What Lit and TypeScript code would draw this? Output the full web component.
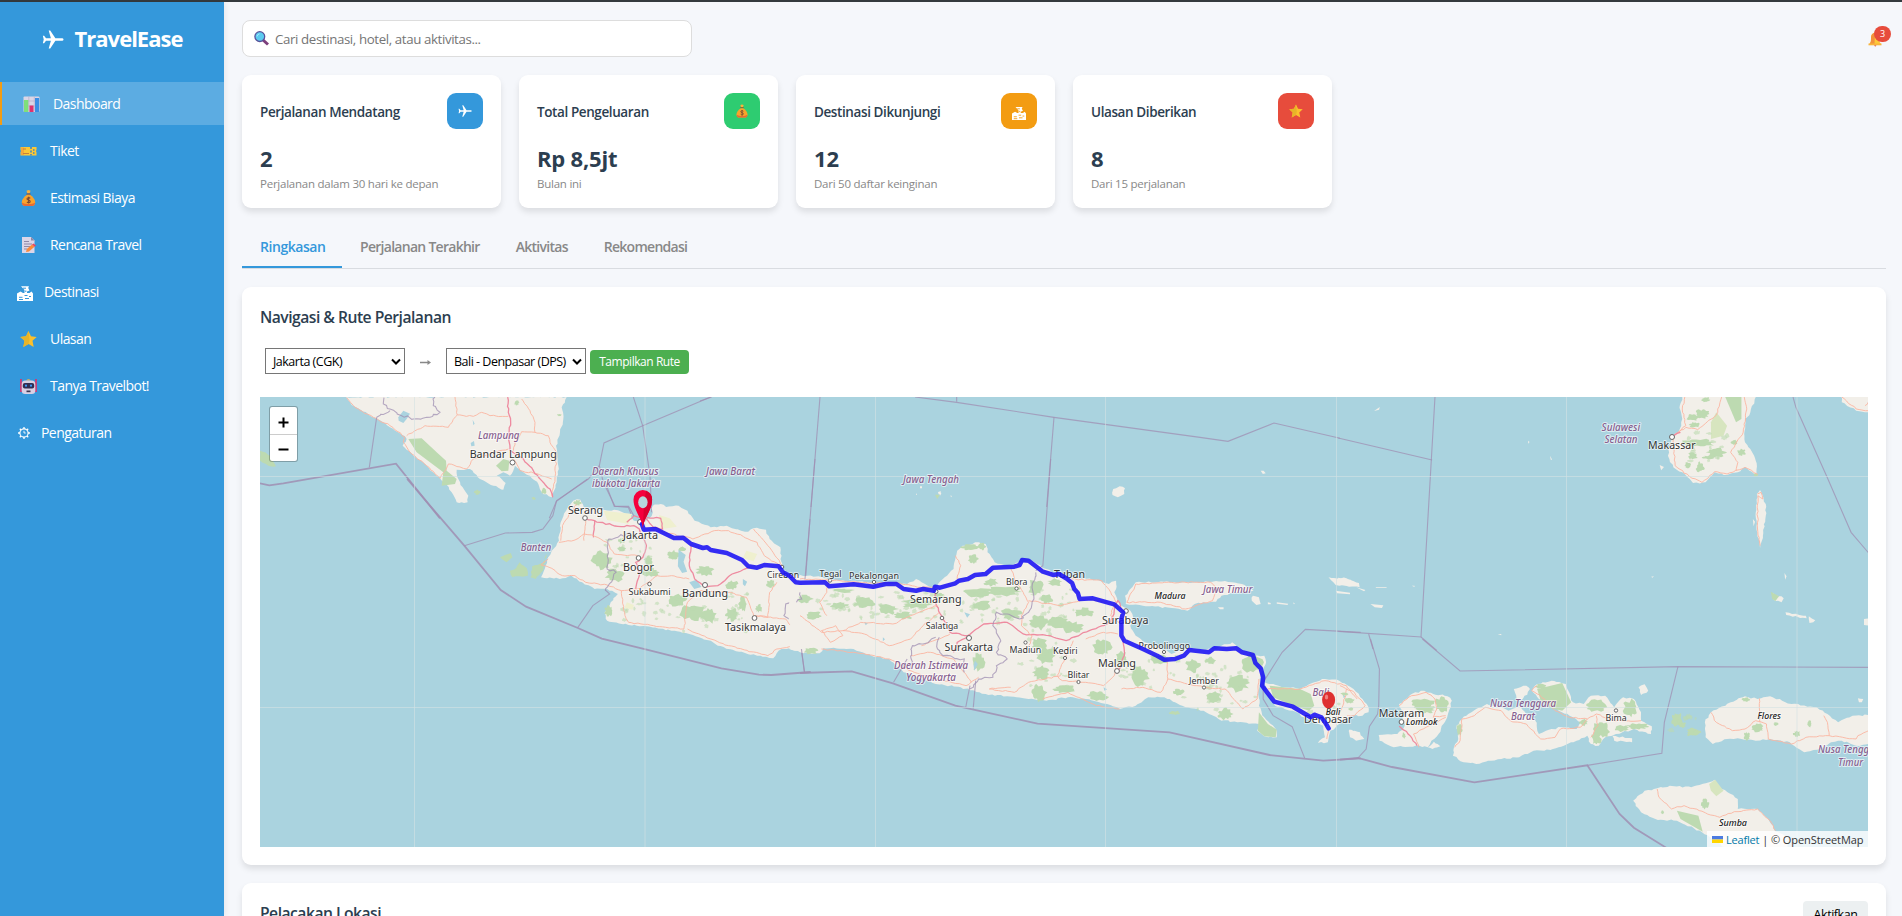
import { LitElement, html, svg, css } from "lit";
import { customElement } from "lit/decorators.js";

/* ---------- icons ---------- */
const plane = svg`<path fill="#fff" d="M21.4 9.3H14L8.6 1H7l2.3 8.3H4.2L2.2 6.6H.9l.9 3.9-.9 3.9h1.3l2-2.7h5.1L7 20h1.6L14 11.700h7.400q1.100-.4 1.100-1.200t-1.100-1.200z"/>`;
const bars = svg`<rect x=".5" y=".5" width="16" height="15.500" rx="1" fill="#dcd6e6"/><path d="M5.800.5v15M11.300.5v15M.5 5h16M.5 10h16" stroke="#b8aecb" stroke-width=".7"/><rect x="1" y="4" width="4.300" height="12" fill="#7fe07a"/><rect x="6.500" y="9.500" width="4" height="6.500" fill="#e0306e"/><rect x="12" y="2" width="4" height="14" fill="#3b8fe6"/>`;
const ticket = svg`<path d="M.5 4h10v1h1V4h5v3.200a1 1 0 0 0 0 1.800v3.500H.5V9a1 1 0 0 0 0-1.800z" fill="#fbc836"/><path d="M1 4.500h3v7.500H1z" fill="#f5a93b"/><path d="M3 6h3M3 10.500h6" stroke="#c8803c" stroke-width="1"/><path d="M11 4v2M11 7.500v2M11 11v1.500M13 7h1.500M13 10h1.500" stroke="#3b86c8" stroke-width="1.500"/>`;
const bag = svg`<path d="M6.500.8 8.500 0l2 .8-.8 2.500h-2.400z" fill="#fbb03b"/><path d="M6.500 3.500h4v1.200h-4z" fill="#8f4a2c"/><path d="M7 4.700h3c2.800 2 5.200 4.500 5.200 7.500 0 2.600-1.600 3.800-3 3.800H4.800c-1.400 0-3-1.200-3-3.800 0-3 2.400-5.500 5.200-7.500z" fill="#f9a32c"/><path d="M1.900 12.500c.2 2.600 1.600 3.500 2.900 3.500h7.400c1.300 0 2.700-.9 2.900-3.500-3 2-10 2-13.200 0z" fill="#e56b35"/><path d="M10.200 8.300c-.8-1-3.200-.8-3.200.6s3.200 1 3.200 2.500-2.400 1.600-3.300.5M8.600 6.800v6.800" stroke="#7d4a33" fill="none" stroke-width="1.100"/>`;
const memo = svg`<path d="M2 0h9l3.500 3.500V16H2z" fill="#dcd6e8"/><path d="M11 0v3.500h3.500z" fill="#8e86a5"/><path d="M4 4.500h5M4 7h8M4 9.500h6M4 12h3" stroke="#9188a8" stroke-width="1"/><path d="m6 15 .8-3L12 7.600l2.500 2.200L9 14.500z" fill="#fb8b3c"/><path d="m12 7.600 1.500-1.200 2.500 2-1.500 1.400z" fill="#e8455e"/>`;
const city = svg`<path fill="#fff" d="M0 16V8.500L3.500 6.500 6 8h1.500V5L4 1.200h8l-.8 1.800 1.300 2.500L10 6.500V8h2.500L14.500 6.500 16 8.500V16z"/><path stroke="var(--cut)" fill="none" d="M6 3.200h3M8.800 5.500v1.500M2 12.300h3.500M7.500 10.500h3M8 13.500h4M12 11.500h2M2 14.500h4"/>`;
const star = svg`<path d="m8.500.1 2.500 5.100 5.700.7-4.200 3.900 1.200 6.200-5.200-3-5.200 3 1.200-6.200L.3 5.900 6 5.200z" fill="#fbc02d"/><path d="m8.500.1-2.500 5.100-5.700.7 4.200 3.900-1.200 6.200 5.200-3 1-4z" fill="#e8b428"/>`;
const robot = svg`<path d="M1 1v13M16 1v13" stroke="#f0245e" stroke-width="1.500"/><path d="M6 2.500Q8.500 0 11 2.500z" fill="#fbb03b"/><rect x="1.700" y="2.500" width="13.600" height="13.500" rx="3.500" fill="#d8d0e4"/><rect x="2.800" y="5" width="11.400" height="5.500" rx="2" fill="#322d52"/><circle cx="6" cy="7.700" r="1.100" fill="#3b9bff"/><circle cx="11" cy="7.700" r="1.100" fill="#3b9bff"/><rect x="6.500" y="12.500" width="4" height="1.700" fill="#3c3752"/>`;
const gear = svg`<g fill="none" stroke="#fff"><circle cx="8" cy="8" r="4.700" stroke-width="1.300"/><path stroke-width="1.500" d="M8 1.200v2.200M8 12.600v2.200M1.200 8h2.200M12.600 8h2.200M3.200 3.200l1.500 1.500M11.300 11.300l1.500 1.500M12.800 3.200l-1.500 1.500M4.700 11.300l-1.500 1.500"/><path d="M8 5.500v2.500h2"/></g>`;
const lens = svg`<path d="m9 9 5 4.500" stroke="#7d3f7c" stroke-width="3"/><circle cx="5.800" cy="5.600" r="4.900" fill="#5ccbf0" stroke="#57519a" stroke-width="1.300"/><path d="M3 5.500q0-2 2.500-2.700" stroke="#a5ecff" fill="none"/>`;
const bell = svg`<path d="M1.500 12c1.300-1.500 1.500-3 1.500-5.500C3 3 4.500.8 7 .8S11.200 3 11.200 6.500c0 2.500.3 4 1.800 5.500z" fill="#fdc93a"/><path d="M1.500 12C2.800 10.500 3 9 3 6.500 3 3 4.500.8 7 .8L6.500 12z" fill="#f3913c"/><path d="M.5 11.500h13v1.800H.5z" fill="#f9b53b"/><path d="M6 13.300h2.500l-1.200 1.500z" fill="#e0633a"/>`;
const ic = (g: unknown, vb: string) => html`<svg viewBox=${vb}>${g}</svg>`;

/* ---------- map geometry: each sheet carries its own origin and scale ---------- */
type Pt = [number, number];
const parse = (s: string): Pt[] => s.trim().split(/\s+/).map((p) => p.split(",").map(Number) as Pt);
let seed = 7;
const rnd = () => ((seed = (seed * 16807) % 2147483647) / 2147483647) - 0.5;
const rough = (s: string, amp: number, close = true) => {
  const p = parse(s);
  const out: string[] = [];
  const n = close ? p.length : p.length - 1;
  for (let i = 0; i < n; i++) {
    const a = p[i];
    const b = p[(i + 1) % p.length];
    const k = Math.max(1, Math.round(Math.hypot(b[0] - a[0], b[1] - a[1]) / 9));
    for (let j = 0; j < k; j++) {
      const t = j / k;
      const w = j ? amp : 0;
      out.push(`${(a[0] + (b[0] - a[0]) * t + rnd() * w).toFixed(1)},${(a[1] + (b[1] - a[1]) * t + rnd() * w).toFixed(1)}`);
    }
  }
  if (!close) out.push(p[p.length - 1].join(","));
  return out.join(" ");
};
const land = (s: string, cls = "land") => svg`<polygon class=${cls} points=${rough(s, 5)}/>`;
const road = (s: string) => svg`<polyline class="road" points=${rough(s, 4, false)}/>`;
const main = (s: string) => svg`<polyline class="road major" points=${rough(s, 4, false)}/>`;
const edge = (s: string) => svg`<polyline class="edge" points=${s}/>`;
const sea = (s: string) => svg`<polyline class="edge sea" points=${s}/>`;
const prov = (s: string) => svg`<polyline class="edge" points=${rough(s, 9, false)}/>`;
const wood = (cx: number, cy: number, rx: number, ry: number, cls = "wood") => {
  const pts: string[] = [];
  for (let i = 0; i < 22; i++) {
    const a = (i / 22) * Math.PI * 2;
    const r = 0.9 + rnd() * 0.55;
    pts.push(`${(cx + Math.cos(a) * rx * r).toFixed(1)},${(cy + Math.sin(a) * ry * r).toFixed(1)}`);
  }
  return svg`<polygon class=${cls} points=${pts.join(" ")}/>`;
};
const woods = (list: string) =>
  list.trim().split(/\s+/).map((w) => {
    const [a, b, c, d] = w.split(",").map(Number);
    return wood(a, b, c, d);
  });
const specks = (cx: number, cy: number, rx: number, ry: number, n: number) =>
  Array.from({ length: n }, () => wood(cx + rnd() * 2 * rx, cy + rnd() * 2 * ry, 3 + (rnd() + 0.5) * 7, 3 + (rnd() + 0.5) * 5, "wood thin"));

const sumatra = svg`<g transform="translate(240 280) scale(.33333)">
  ${land("318,354 335,378 362,392 390,410 420,424 450,445 478,462 500,480 488,500 520,530 560,560 590,590 615,610 635,640 650,670 683,670 685,650 668,625 655,600 650,572 690,570 720,600 760,620 790,632 797,612 770,590 790,580 810,590 825,560 850,580 870,590 895,615 905,640 935,655 950,610 955,560 948,500 960,460 970,420 965,385 980,354")}
  ${land("60,515 90,530 108,562 85,560 60,545", "wood")}
  <polygon class="wood" points="505,480 545,478 590,520 618,545 620,575 650,600 645,615 605,620 610,580 570,550 530,520"/>
  <polygon class="wood" points="768,560 790,540 808,545 805,575 785,577"/>
  ${woods("912,636,9,9 830,372,8,8 958,408,7,3 712,640,9,8 881,658,6,5")}
  <polygon class="lake" points="475,415 490,395 510,404 500,420 490,432 476,425"/><path class="lake" d="M698 422l6 12-4 4zM692 492l10-6 2 14-10 2z"/>
  ${road("320,356 345,385 400,415 450,440 495,475 490,490 510,520 560,560 600,598 625,555 680,570 700,540 760,520 805,510")}
  ${road("500,470 555,440 625,445 652,408 645,354")}${road("652,408 700,412 725,400 750,410 805,412")}${road("845,360 870,395 885,430 885,460 845,458 825,490 820,515")}${road("885,460 925,470 930,490 950,520 945,600 935,650")}${road("820,540 840,575 880,582 935,600")}
  ${main("803,354 805,400 812,430 805,470 810,515 850,540 880,575 905,605 930,630 938,655")}
  ${prov("432,356 430,375 450,390 485,410 520,420 560,415 600,400 580,380 585,354")}${prov("410,415 450,395")}
  ${edge("388,565 410,415")}${sea("60,613 88,619 130,613 468,554 600,718")}
  ${edge("1180,354 1208,440 1230,590 1235,700")}${edge("1412,354 1208,440 1092,492 1078,560 1045,600 950,665 928,718")}
  ${edge("1078,560 1090,610 1125,682 1165,685 1175,710")}
</g>`;

const westJava = svg`<g transform="translate(250 480) scale(.35714 .33333)">
  ${land("815,295 835,235 845,215 865,185 870,130 885,95 905,65 925,62 935,85 990,92 1030,94 1060,104 1075,125 1100,130 1125,110 1128,80 1150,75 1165,84 1200,80 1225,95 1245,125 1290,145 1335,140 1375,155 1395,158 1410,148 1445,152 1455,180 1485,205 1490,265 1500,290 1530,300 1545,290 1575,300 1575,510 1545,520 1510,508 1480,515 1465,538 1420,530 1370,518 1310,500 1290,485 1230,465 1180,455 1110,442 1060,438 1000,425 993,400 1010,370 1030,345 1000,330 965,330 930,310 900,290 875,298")}
  ${land("700,235 730,222 735,235 718,250", "wood")}${land("728,275 745,268 755,250 775,268 778,290 755,292 735,295", "wood")}${land("790,262 820,252 830,225 820,275 800,300 785,295", "wood")}
  ${woods("917,72,10,9 1040,185,10,8 985,245,28,28 1020,290,26,20 1040,210,14,8 1115,245,12,14 1120,280,24,14 1185,228,16,14 1275,275,26,16 1350,318,18,14 1195,365,28,18 1240,400,34,26 1285,410,24,26 1380,375,12,22 1350,405,20,20 1425,388,10,12 1458,315,12,12 1210,210,10,8 1005,395,12,16")}
  ${specks(1110,390,90,45,20)}${specks(1300,400,100,60,22)}${specks(1060,220,70,50,14)}
  <path class="lake" d="M1200 212l20 16-6 20 10 30-14 4-12-20zM1380 300l12 8-6 14-6-6zM1230 310l20-8 14 22-20 6z"/>
  <path fill="#eff0cf" d="M1145 108l30 10 20 25-45 8zM990 95l80 10-10 30-60-12zM1055 370l20 8-4 14-22-6zM1390 215l30 10-10 22-30-10z"/>
  ${main("940,120 980,130 1030,142 1075,140 1090,150 1110,200 1100,235 1080,250 1090,290 1080,330")}${main("1235,200 1230,260 1245,300 1275,325 1310,320 1350,285 1400,265")}${main("965,125 962,175")}${main("1055,130 1075,110 1110,120 1130,145 1155,150 1150,118 1110,115")}
  ${road("865,190 910,183 935,165 965,172 1000,190 1020,225 1085,230")}${road("870,185 875,140 900,100 915,75")}${road("940,125 935,185")}${road("835,240 815,258 845,268 875,290 910,290 940,310 1000,318 1040,335 1085,330 1140,290 1180,290 1230,300")}${road("1130,152 1240,180 1300,155 1340,155 1420,190 1440,230 1490,265")}${road("1040,335 1050,410 1060,430 1130,440 1215,450 1225,370 1260,335 1345,340 1390,355 1410,410 1450,415 1455,340 1475,310")}${road("1225,450 1290,480 1340,500 1450,530 1475,510 1530,500")}${road("1410,150 1450,200 1470,230 1490,260")}${road("1415,410 1500,420 1550,480 1568,485")}
  ${prov("1065,160 1030,175 1005,180 1000,270 1025,280 995,335")}${prov("1540,320 1545,365 1500,375 1495,410 1525,430 1540,500")}
  ${edge("600,200 715,162 790,160 820,150 848,110 858,67 945,0")}${edge("918,445 960,380 1007,345 995,333")}${edge("1000,25 1020,82 1060,82 1075,110")}${edge("1553,580 1544,515")}${edge("1568,120 1554,320")}
  ${sea("440,0 600,200 702,333 773,383 918,447 985,479 1108,511 1320,568 1425,587 1460,588 1570,579")}
</g>`;

const eastJava = svg`<g transform="translate(800 460) scale(.35714 .33333)">
  ${land("-30,350 20,350 60,355 110,365 190,370 240,375 300,375 325,360 350,375 375,390 400,360 430,330 440,275 455,260 500,250 520,255 525,280 545,310 580,320 620,310 650,305 690,330 720,345 760,355 830,362 865,375 885,365 885,390 880,400 890,425 900,440 925,455 935,480 925,500 940,530 965,550 1000,560 1040,585 1080,570 1120,570 1165,570 1180,560 1210,550 1225,565 1270,590 1300,590 1305,610 1290,650 1285,690 1285,740 1300,775 1335,815 1335,835 1300,832 1280,815 1285,795 1240,790 1180,785 1130,755 1080,745 1050,730 1020,715 975,715 940,740 895,750 860,735 800,720 750,715 690,725 640,720 580,712 520,705 450,685 380,675 290,640 250,600 200,590 150,570 65,568 55,583 0,580 -30,570")}
  ${land("910,410 940,370 1020,368 1110,370 1190,366 1245,378 1270,395 1220,400 1180,410 1165,428 1130,430 1105,435 1085,455 1050,448 960,440 912,435")}
  ${land("1300,670 1340,680 1400,690 1440,670 1470,660 1510,665 1550,690 1575,720 1592,745 1592,760 1575,770 1545,770 1510,795 1500,805 1485,815 1478,850 1450,852 1470,835 1465,800 1430,785 1380,755 1330,740 1308,705")}
  ${land("877,90 895,82 910,88 908,105 890,115 875,108")}${land("1268,410 1285,415 1290,435 1278,438 1265,425")}${land("1480,355 1530,358 1565,372 1567,385 1500,378")}${land("1535,815 1568,820 1580,840 1560,842")}
  <path class="land" d="M1290 35l8 0 6 8-8 2zM1310 430l8 2v4h-8zM1335 430l32 4-2 4-30-4zM1170 445h16v6h-10zM388 98l8 4-4 8zM1500 395l40 6v5l-36-3zM1380 430l6 4-3 2z"/>
  <polygon class="wood" points="1315,680 1400,690 1430,705 1440,740 1425,755 1370,735 1325,715"/><polygon class="wood" points="1285,760 1310,795 1335,812 1332,835 1300,832 1282,815"/>
  ${woods("1050,762,16,6 1265,610,30,32 1225,672,34,26 1160,715,20,18 1190,765,22,18 1100,620,20,22 1150,605,16,10 1060,700,16,10 1005,600,30,14 950,650,26,30 845,565,26,26 795,460,28,14 720,490,34,18 670,490,30,22 760,505,34,18 570,395,56,15 500,400,44,14 590,465,30,16 330,435,44,14 245,450,30,16 180,430,32,16 110,440,24,12 40,470,24,12 15,420,22,12 510,440,28,16 670,555,24,18 690,590,28,26 675,640,26,22 500,610,18,26 670,700,20,26 740,690,34,12 835,710,30,14 390,410,16,8 485,300,14,14 475,265,26,10 510,262,10,12 290,470,26,12 120,395,30,6 660,385,22,26 690,420,18,14 715,370,20,12 535,370,20,12 900,600,16,24 30,575,22,10")}
  ${specks(300,440,260,40,60)}${specks(620,440,170,60,40)}${specks(700,600,90,90,30)}${specks(1180,690,110,70,36)}${specks(980,640,80,50,18)}${specks(1480,730,60,30,10)}
  <path class="lake" d="M460 460l16 6-8 10zM490 605l8 10-10 20-2-16zM850 685l10 6-8 4zM232 535l6 6-6 6zM180 490l10 3-6 6zM1520 705l8 8-6 4z"/>
  ${main("380,400 382,440 400,480 420,520 470,530 515,495 580,490 625,525 700,530 745,545 810,515 870,490 885,440")}${main("905,540 908,590 890,640")}${main("878,440 890,425 905,460")}${main("470,530 440,550 430,580")}
  ${road("0,360 60,362 150,368 200,372 270,370 330,385 375,385")}${road("0,470 60,520 120,515 170,490 260,495 310,470 385,440")}${road("80,370 75,400 55,430 75,470")}${road("100,500 120,530 85,550 60,515 100,500")}${road("120,515 180,525 250,560 310,540 345,500 390,460")}${road("60,570 150,580 250,600 320,640 400,665 465,680 500,655")}${road("310,590 365,580 430,600 460,640 480,670")}${road("340,560 390,540 420,525")}${road("435,290 450,320 440,360")}${road("590,325 605,370 625,400 640,430 620,470 620,500")}${road("640,425 730,440 800,420 860,430")}${road("760,360 845,365 870,400 885,430")}${road("765,545 745,590 720,650 735,665 800,670 850,680 880,650 885,610")}${road("900,690 960,685 1010,700 1030,660 1028,600")}${road("1030,660 1130,685 1190,690 1240,750 1280,720 1285,660")}${road("730,650 640,670 600,700 530,690 590,685")}${road("620,500 650,530 640,560")}${road("800,540 850,520 890,525")}${road("900,500 870,470 880,430")}${road("915,430 940,375 1040,370 1150,370 1170,390 1155,425 1080,450 1010,430 915,430")}${road("1310,690 1400,690 1470,665 1530,680 1560,720")}${road("1480,815 1475,840")}${road("1500,795 1520,740 1530,690")}${road("680,720 750,700 830,740 895,750")}
  ${prov("660,340 650,380 655,420 640,460 615,480 580,465 550,460 540,500 560,540 550,580 580,600 550,620 540,655 500,660 475,690")}${prov("390,535 385,570 400,590 460,600 460,640")}${prov("310,630 315,560 340,555 380,535")}${prov("0,400 5,420 -10,430")}
  ${edge("42,0 14,360")}${edge("702,0 680,320 660,335")}${edge("262,670 300,600")}${edge("464,745 476,680")}${edge("485,748 492,665")}${edge("12,638 4,570")}${edge("1297,670 1350,580 1415,511 1570,520")}${edge("1297,670 1297,720 1325,770 1378,803 1413,897")}
  ${sea("0,642 145,637 260,673 435,740 665,794 1035,820 1315,888 1465,905 1570,898")}
</g>`;

const nusa = svg`<g transform="translate(1340 640) scale(.3584 .33333)">
  ${land("165,195 200,165 235,155 260,165 300,172 312,185 300,230 275,285 255,305 245,325 210,320 150,325 110,305 108,288 160,285 180,262 175,230")}
  ${land("25,272 50,280 60,300 45,305 28,295")}${land("245,325 262,308 280,322 258,330")}
  ${land("340,240 380,210 410,195 450,205 470,215 500,200 520,225 545,245 555,285 590,270 620,265 660,270 672,250 650,235 610,215 590,195 555,180 535,155 550,135 590,125 630,135 650,190 680,195 700,170 740,170 765,205 790,175 820,180 840,220 840,245 870,262 868,285 820,270 770,285 740,295 722,320 700,315 690,290 660,305 610,325 570,335 540,335 500,355 450,360 380,375 345,370 315,350 318,325 330,300 325,260")}
  ${land("485,150 520,140 530,150 510,180 495,185")}${land("833,145 850,136 860,155 840,168")}${land("760,290 815,298 815,310 765,305")}${land("1445,178 1460,180 1456,190 1448,190")}
  ${land("1018,250 1035,220 1090,190 1130,172 1165,180 1200,172 1260,195 1330,205 1360,225 1390,250 1430,230 1475,228 1475,315 1440,320 1400,305 1370,310 1350,325 1295,340 1255,310 1200,300 1160,305 1120,300 1080,300 1040,315 1020,295")}
  ${land("818,485 850,455 885,448 920,440 980,445 1030,430 1045,422 1065,450 1110,480 1110,510 1165,510 1195,540 1210,570 1250,600 1250,630 1080,630 1010,580 940,545 880,540 840,520")}
  <polygon class="wood" points="550,150 620,132 645,190 620,215 590,208 560,185"/><polygon class="wood" points="940,515 1000,530 1012,578 950,540"/><polygon class="scrub" points="1030,435 1047,422 1070,455 1050,472 1035,455"/>
  ${woods("230,195,38,16 285,195,18,26 240,210,26,14 715,200,30,18 810,208,20,26 730,270,22,28 715,300,14,20 830,262,34,10 785,268,20,10 333,272,8,18 940,240,16,22 955,258,10,10 985,280,20,14 1132,182,12,7 1165,268,20,14 1135,292,9,12 1275,285,10,9 1310,255,6,10 1018,495,11,16 900,520,5,6 560,142,14,7 680,250,12,10 178,290,6,8 1217,255,8,6")}
  ${specks(960,260,40,30,8)}
  ${road("165,200 200,170 240,160 265,180 270,210 260,235 295,230")}${road("295,235 240,265 205,285 220,325")}${main("165,262 190,285 215,320")}
  ${road("320,325 335,305 340,240 375,230 405,205 450,215 475,245 520,255 545,285 560,300 600,295 615,270 670,265 690,240 640,235 600,215 570,180 535,155 550,140")}${road("690,240 715,225 760,245 840,245")}${road("715,230 720,260 700,295")}
  ${road("1035,220 1050,250 1095,275 1130,270 1160,245 1190,255 1195,300 1260,315 1300,295 1365,290 1360,250 1350,230")}${road("1170,178 1172,250")}${road("1365,290 1440,300 1445,290 1475,275")}
  ${road("885,450 890,475 925,510 960,500 1060,535 1100,518 1165,510 1200,545 1215,575")}
  ${road("0,140 40,160 70,200 40,230 20,230")}${woods("25,185,14,10 12,165,10,5 30,210,7,6")}
  ${edge("85,0 110,90 108,200 105,225 82,262 73,330 50,357")}${edge("230,0 335,96 943,83 1475,85")}${edge("943,83 905,250 898,343 690,379")}
  ${sea("0,362 50,357 145,384 375,430 690,379 780,525 820,566 910,626")}
</g>`;

const sulawesi = svg`<g transform="translate(1340 390) scale(.3584 .33333)">
  ${land("955,24 948,50 955,90 948,120 925,150 915,200 930,235 955,250 970,265 985,282 1020,280 1045,250 1080,258 1110,250 1130,235 1165,260 1160,215 1150,190 1130,160 1130,90 1145,70 1160,24 1160,10 955,10")}
  ${land("1395,10 1400,40 1440,65 1475,70 1475,10")}${land("1163,315 1172,303 1188,345 1188,380 1180,440 1172,478 1164,430 1160,370")}${land("1243,670 1300,680 1302,688 1245,678")}${land("1308,682 1326,694 1310,702")}${land("1208,612 1238,628 1232,640 1210,632")}${land("1462,690 1475,688 1475,710 1462,708")}
  <path class="land" d="M1152 390l6 8-4 14zM892 228l12 6-8 10zM95 66l16-12-2 8zM85 645l36 4-4 8-20-2zM45 595l26 8-4 4zM1240 552l6 10-4 10zM1160 500v14M525 155l4 4-4 5zM586 200l6 12h-4zM200 590h8v4zM66 92l6-4zM100 594h30v2h-30zM440 736l10-1v4zM868 563l8-1-4 4z"/>
  ${land("-5,566 30,572 45,590 20,588 -5,580")}
  <polygon class="wood" points="1202,608 1225,622 1215,636 1206,630"/><polygon class="wood" points="1075,24 1120,24 1120,90 1105,100"/><polygon class="scrub" points="1050,70 1080,110 1070,140 1035,150 1035,100"/>
  ${woods("1020,32,12,8 1010,75,20,14 985,85,20,10 1000,162,46,12 985,200,14,12 1050,190,28,14 1005,235,12,16 970,228,9,10 990,108,16,8 1100,160,10,10 1120,190,12,10 1160,258,7,5 1030,205,18,6")}
  ${specks(1030,180,60,50,16)}
  ${road("962,24 955,60 965,110 930,140 935,230 975,262 1010,280 1045,248 1080,255 1130,235 1165,255")}${road("930,140 965,115 998,122 1050,78 1065,24")}${road("1128,24 1135,60 1125,130 1090,190 1110,220 1105,245")}${road("1400,24 1440,60 1475,65")}${road("1465,50 1475,38")}${road("1165,315 1175,310 1180,330 1166,320 1165,420 1172,470")}${main("925,145 950,130")}
  ${edge("265,24 226,744 -5,727")}${edge("226,744 270,784")}${edge("-5,147 257,213")}${edge("80,735 92,780")}${edge("1264,24 1272,55 1358,262 1426,430 1475,492")}
</g>`;

const northSea = svg`<g transform="translate(700 398) scale(.33333)">
  ${edge("0,12 35,0")}${edge("360,0 333,330")}${edge("645,0 770,16 1062,61 1500,121 1584,133 1722,78 1920,124")}${edge("770,0 770,14")}${edge("1062,61 1040,330")}
  <path class="land" d="M660 268h6v6h-6zM714 286l8-4v10h-6zM648 290h3v3h-3zM750 296h5v5z"/><path class="wood" d="M705 293h15l-8 13z"/>
</g>`;

const dots: [number, number, number][] = [
  [512.500, 463.500, 2.500], [585, 519, 2.300], [640, 523, 2.500], [638.500, 559, 2.300], [649.500, 585, 1.800], [705, 586, 2.500], [754.500, 619, 2.400], [782, 568, 1.800],
  [830, 581.500, 1.700], [874, 583, 1.700], [936, 592.500, 2], [942, 619, 1.800], [969, 639, 2.500], [1025.500, 643.500, 1.600], [1065, 659, 1.600], [1078.500, 683, 1.600],
  [1117, 672, 2.400], [1016.500, 589.500, 1.600], [1126, 612, 2.300], [1164, 653, 1.600], [1204, 688.500, 1.600], [1401.500, 723, 2.400], [1616, 711.500, 1.700], [1672, 438, 2.500],
];
const labels: [string, number, number, number, number, string][] = [
  ["Bandar Lampung", 469.700, 459.300, 87, 11.500, "city"], ["Lampung", 478, 439.500, 41.500, 10, "area"], ["Daerah Khusus", 592, 475.700, 66.500, 10, "area"], ["ibukota Jakarta", 592, 487.700, 68, 10, "area"],
  ["Jawa Barat", 706, 475.700, 49, 10, "area"], ["Serang", 568, 514.700, 35, 11, "city"], ["Jakarta", 623, 540, 35, 11, "city"], ["Bogor", 623, 571.500, 31, 11, "city"], ["Sukabumi", 628.500, 595.700, 42, 9.500, "city"],
  ["Bandung", 682, 598.300, 46, 11, "city"], ["Tasikmalaya", 725, 631.700, 61, 11, "city"], ["Cirebon", 767, 578.700, 32, 9.500, "city"], ["Banten", 520.700, 552, 30.500, 10, "area"],
  ["Tegal", 819.600, 577.700, 22, 9.500, "city"], ["Pekalongan", 849, 579.500, 50, 9.500, "city"], ["Jawa Tengah", 903, 483.500, 56, 10, "area"], ["Semarang", 910, 604, 51.500, 11, "city"], ["Salatiga", 925.700, 629.500, 32.500, 9.500, "city"],
  ["Surakarta", 944.600, 652, 48.500, 11, "city"], ["Madiun", 1009.600, 654.300, 31.500, 9.500, "city"], ["Kediri", 1053, 654.700, 24.500, 9.500, "city"], ["Blitar", 1067.500, 679, 22, 9.500, "city"], ["Malang", 1098, 668.300, 38, 11, "city"],
  ["Blora", 1006, 586, 21.500, 9.500, "city"], ["Tuban", 1054, 579, 31, 11, "city"], ["Surabaya", 1102, 625, 46.500, 11, "city"], ["Probolinggo", 1138.600, 649.700, 51.500, 9.500, "city"], ["Jember", 1189, 684.700, 30, 9.500, "city"],
  ["Madura", 1154.600, 600, 31, 9.500, "isle"], ["Jawa Timur", 1203, 594, 49.500, 10, "area"], ["Daerah Istimewa", 894, 670, 74, 10, "area"], ["Yogyakarta", 906, 682, 50, 10, "area"], ["Bali", 1312.500, 697, 16.500, 10, "area"],
  ["Bali", 1325.700, 715.700, 14.500, 9.500, "isle"], ["Denpasar", 1304, 724, 48.500, 11, "city"], ["Mataram", 1378.700, 718.300, 45.500, 11, "city"], ["Lombok", 1406, 726.300, 31.500, 9.500, "isle"], ["Nusa Tenggara", 1490, 708.300, 66, 10, "area"],
  ["Barat", 1511, 720.700, 24, 10, "area"], ["Bima", 1605.600, 722.300, 21, 9.500, "city"], ["Flores", 1757.500, 720, 23.500, 9.500, "isle"], ["Nusa Tenggara", 1818, 754.300, 66, 10, "area"], ["Timur", 1838, 766.700, 25, 10, "area"],
  ["Sumba", 1719, 826.700, 28, 9.500, "isle"], ["Sulawesi", 1601.600, 432.300, 38.500, 10, "area"], ["Selatan", 1604.500, 444, 33, 10, "area"], ["Makassar", 1648, 450, 47.500, 11, "city"],
];
const routeWest = "1097,135 1103,152 1135,150 1187,177 1213,176 1235,195 1268,207 1280,205 1290,213 1335,222 1378,243 1395,262 1420,266 1440,258 1480,262 1492,280 1510,290 1528,310 1540,311";
const routeEast = "0,371 70,370 82,382 150,376 205,383 240,375 270,375 290,390 325,395 345,390 375,395 378,383 392,386 435,373 445,365 470,360 490,348 520,345 540,326 600,323 615,318 622,303 640,305 680,338 710,348 725,345 745,358 762,372 768,390 778,402 783,420 820,418 860,430 880,436 905,460 900,480 900,530 908,545 960,570 1000,590 1020,602 1050,600 1075,590 1090,573 1145,580 1160,568 1195,570 1222,568 1238,580 1268,588 1275,612 1290,628 1297,655 1294,680 1308,700 1328,728 1380,743 1430,775 1440,767 1460,775 1473,795 1480,808";
const scaleTo = (s: string, ox: number, oy: number) => parse(s).map(([x, y]) => `${(ox + x / 2.8).toFixed(1)},${(oy + y / 3).toFixed(1)}`).join(" ");
const route = `${scaleTo(routeWest, 250, 480)} ${scaleTo(routeEast, 800, 460)}`;

@customElement("route-map")
class RouteMap extends LitElement {
  static styles = css`
    :host { display: block; position: relative; height: 450px; overflow: hidden; background: #aad3df; font-family: "Open Sans", "Noto Sans", sans-serif; }
    .sheet { display: block; width: 100%; height: 450px; }
    .land { fill: #f2efe9; }
    .wood { fill: #bddab1; }
    .thin { opacity: 0.6; }
    .scrub { fill: #d7e5bf; }
    .lake { fill: #aad3df; }
    polyline { fill: none; vector-effect: non-scaling-stroke; }
    .road { stroke: #fbb5a1; stroke-width: 0.9; }
    .major { stroke: #ee8ba0; stroke-width: 1.3; }
    .edge { stroke: #a08fb3; stroke-width: 1.1; opacity: 0.75; }
    .sea { stroke-width: 1.800; opacity: 0.85; }
    .grid { stroke: #d5e2e4; stroke-width: 1; opacity: 0.6; }
    .dot { fill: #fff; stroke: #666; stroke-width: 1; }
    text { font-family: "Noto Sans", "Open Sans", sans-serif; paint-order: stroke; stroke: rgba(255, 255, 255, 0.6); stroke-width: 2px; stroke-linejoin: round; }
    .city { fill: #333; }
    .area { fill: #87608f; font-style: italic; font-weight: 500; }
    .isle { fill: #222; font-style: italic; font-weight: 500; }
    .route { stroke: #1a12f5; stroke-width: 4.500; stroke-linejoin: round; stroke-linecap: round; opacity: 0.88; }
    .zoom { position: absolute; left: 9px; top: 9px; width: 27px; border: 1px solid rgba(0, 0, 0, 0.25); border-radius: 3px; background: #fff; background-clip: padding-box; }
    .zoom span { display: flex; align-items: center; justify-content: center; height: 27px; padding-top: 3px; box-sizing: border-box; }
    .zoom span + span { border-top: 1px solid #ccc; }
    .zoom svg { width: 11px; height: 11px; }
    .credit { position: absolute; right: 0; bottom: 0; height: 16px; width: 161px; box-sizing: border-box; padding: 0 4px 0 5px; display: flex; align-items: center; gap: 3px; background: rgba(255, 255, 255, 0.8); font-size: 11px; color: #333; white-space: nowrap; }
    .credit svg { width: 11px; height: 7px; flex: none; }
    .credit a { color: #0078a8; letter-spacing: -0.200px; }
    .osm { letter-spacing: -0.080px; }
  `;
  render() {
    return html`
      <svg class="sheet" viewBox="260 398 1608 450">
        ${sumatra}${westJava}${eastJava}${nusa}${sulawesi}${northSea}
        ${[414.500, 645, 875.500, 1105.500, 1336.500, 1566.500, 1797].map((x) => svg`<line class="grid" x1=${x} x2=${x} y1="398" y2="848"/>`)}
        ${[477.500, 708.500].map((y) => svg`<line class="grid" x1="260" x2="1868" y1=${y} y2=${y}/>`)}
        ${dots.map(([x, y, r]) => svg`<circle class="dot" cx=${x} cy=${y} r=${r}/>`)}
        ${labels.map(([t, x, y, w, s, c]) => svg`<text class=${c} x=${x} y=${y} font-size=${s} textLength=${w} lengthAdjust="spacingAndGlyphs">${t}</text>`)}
        <polyline class="route" points=${route}/>
        <path d="M642.800 529c-1-10-9.300-18-9.300-28.500a9.300 9.500 0 0 1 18.600 0c0 10.500-8.300 18.500-9.300 28.500z" fill="#f5003d"/>
        <path d="M642.800 529c1-10 9.300-18 9.300-28.500a9.300 9.500 0 0 0-6-8.800l-2 12z" fill="#d8002f"/>
        <ellipse cx="642.900" cy="503.300" rx="4.700" ry="6" fill="#b6d6dc"/>
        <ellipse cx="1328.600" cy="701" rx="6.500" ry="8.600" fill="#de3030"/><ellipse cx="1326.500" cy="698" rx="1.700" ry="2.500" fill="#f08080"/>
      </svg>
      <div class="zoom">
        <span><svg viewBox="0 0 11 11"><path d="M5.500.5v10M.5 5.500h10" stroke="#000" stroke-width="2"/></svg></span>
        <span><svg viewBox="0 0 11 11"><path d="M.5 5.500h10" stroke="#000" stroke-width="2"/></svg></span>
      </div>
      <div class="credit">
        <svg viewBox="0 0 10 7" preserveAspectRatio="none"><path fill="#4c7be1" d="M0 0h10v3.500H0z"/><path fill="#ffd500" d="M0 3.500h10V7H0z"/></svg>
        <a>Leaflet</a><span class="osm">| © OpenStreetMap</span>
      </div>`;
  }
}

const menu = [
  ["Dashboard", bars, "active"], ["Tiket", ticket, ""], ["Estimasi Biaya", bag, ""], ["Rencana Travel", memo, ""],
  ["Destinasi", city, "near"], ["Ulasan", star, ""], ["Tanya Travelbot!", robot, ""], ["Pengaturan", gear, "small"],
] as const;
const cards = [
  ["Perjalanan Mendatang", "2", "Perjalanan dalam 30 hari ke depan", plane, "0 0 23 21", "blue"],
  ["Total Pengeluaran", "Rp 8,5jt", "Bulan ini", bag, "0 0 17 16", "green"],
  ["Destinasi Dikunjungi", "12", "Dari 50 daftar keinginan", city, "0 0 16 16", "amber"],
  ["Ulasan Diberikan", "8", "Dari 15 perjalanan", star, "0 0 17 16", "red"],
] as const;

@customElement("app-root")
class AppRoot extends LitElement {
  static styles = css`
    :host { display: flex; flex-direction: column; height: 916px; overflow: hidden; background: #f5f7fb; color: #2c3e50; font-family: "Open Sans", "Noto Sans", sans-serif; }
    .strip { height: 2px; flex: none; background: #343a3e; }
    .shell { display: flex; flex: 1; min-height: 0; }
    aside { width: 224px; flex: none; background: #3498db; box-shadow: 2px 0 5px rgba(0, 0, 0, 0.06); color: #fff; }
    .brand { display: flex; align-items: center; justify-content: center; gap: 11px; height: 74px; }
    .brand svg { width: 22px; height: 21px; }
    .brand b { font-size: 22px; letter-spacing: -1px; line-height: 30px; padding-bottom: 2px; }
    nav { display: flex; flex-direction: column; gap: 4px; padding-top: 6px; }
    .item { display: flex; align-items: center; gap: 13px; height: 43px; box-sizing: border-box; padding-left: 20px; font-size: 14px; letter-spacing: -0.550px; }
    .item svg { width: 17px; height: 16px; }
    .active { background: rgba(255, 255, 255, 0.2); border-left: 2px solid #f39c12; padding-left: 21px; }
    .near { padding-left: 17px; gap: 11px; --cut: #3498db; }
    .near svg { width: 16px; height: 16px; margin-top: 2px; }
    .small { padding-left: 17px; gap: 10px; }
    .small svg { width: 14px; height: 14px; }
    main { flex: 1; min-width: 0; padding: 18px 16px 0 18px; display: flex; flex-direction: column; }
    header { display: flex; justify-content: space-between; align-items: center; height: 37px; }
    .search { display: flex; align-items: center; gap: 6px; width: 450px; height: 37px; box-sizing: border-box; padding-left: 11px; border: 1px solid #ddd; border-radius: 8px; background: #fff; color: #757575; font-size: 13.300px; letter-spacing: -0.390px; }
    .search svg { width: 15px; height: 15px; }
    .bell { position: relative; width: 14px; height: 16px; margin-right: 4px; padding-top: 2px; }
    .bell svg { width: 14px; height: 15px; display: block; }
    .badge { position: absolute; left: 6px; top: -4px; width: 17px; height: 16px; border-radius: 8px; background: #e74c3c; color: #fff; font-size: 9px; line-height: 16px; text-align: center; }
    .cards { display: grid; grid-template-columns: repeat(4, 259px); gap: 18px; margin-top: 18px; }
    .card, .panel { background: #fff; border-radius: 9px; box-shadow: 0 4px 6px rgba(0, 0, 0, 0.1); box-sizing: border-box; padding: 18px; }
    .card { height: 133px; }
    .top { display: flex; align-items: center; justify-content: space-between; height: 36px; font-size: 13.500px; font-weight: 600; letter-spacing: -0.400px; }
    .top span { padding-top: 1px; }
    .tile { width: 36px; height: 36px; border-radius: 9px; display: flex; align-items: center; justify-content: center; }
    .tile svg { width: 14px; height: 14px; }
    .blue { background: #3498db; }
    .green { background: #2ecc71; }
    .amber { background: #f39c12; --cut: #f39c12; }
    .amber svg { margin-top: 4px; }
    .red { background: #e74c3c; }
    .value { margin-top: 14px; font-size: 22px; line-height: 31px; font-weight: 700; letter-spacing: -0.200px; }
    .note { margin-top: 2px; font-size: 11.500px; line-height: 16px; color: #888; letter-spacing: -0.240px; }
    .tabs { display: flex; height: 43px; flex: none; margin-top: 18px; border-bottom: 1px solid #d9dce1; font-size: 14px; font-weight: 600; letter-spacing: -0.720px; color: #888; box-sizing: border-box; }
    .tab { padding: 0 18px; line-height: 42px; height: 42px; box-sizing: border-box; }
    .on { color: #3498db; border-bottom: 2px solid #3498db; width: 100px; letter-spacing: -0.450px; }
    .panel { margin-top: 18px; }
    .first { height: 578px; flex: none; }
    h2 { margin: 0; font-size: 15.700px; line-height: 24px; font-weight: 600; letter-spacing: -0.520px; }
    .pick { display: flex; align-items: center; height: 26px; margin: 19px 0 23px 5px; font-size: 12.500px; color: #000; }
    .select { display: flex; align-items: center; justify-content: space-between; width: 140px; height: 26px; box-sizing: border-box; border: 1px solid #767676; padding: 1px 3px 0 7px; letter-spacing: -0.500px; white-space: nowrap; }
    .select svg { width: 10px; height: 7px; flex: none; }
    .arrow { width: 11px; height: 5px; margin: 2px 15px 0; }
    .go { margin: 1px 0 0 4px; width: 99px; height: 24px; line-height: 24px; text-align: center; border-radius: 4px; background: #4caf50; color: #fff; font-size: 12px; letter-spacing: -0.450px; }
    .second { display: flex; align-items: flex-start; justify-content: space-between; height: 90px; flex: none; }
    .enable { width: 65px; height: 28px; line-height: 27px; text-align: center; border-radius: 4px; background: #ecf0f1; color: #000; font-size: 12.500px; letter-spacing: -0.450px; }
  `;
  render() {
    const chevron = html`<svg viewBox="0 0 10 7"><path d="m1 1.500 4 4 4-4" fill="none" stroke="#000" stroke-width="2"/></svg>`;
    return html`
      <div class="strip"></div>
      <div class="shell">
        <aside>
          <div class="brand">${ic(plane, "0 0 23 21")}<b>TravelEase</b></div>
          <nav>${menu.map(([t, g, c]) => html`<div class="item ${c}">${ic(g, c === "near" || c === "small" ? "0 0 16 16" : "0 0 17 16")}<span>${t}</span></div>`)}</nav>
        </aside>
        <main>
          <header>
            <div class="search">${ic(lens, "0 0 15 15")}<span>Cari destinasi, hotel, atau aktivitas...</span></div>
            <div class="bell">${ic(bell, "0 0 14 15")}<span class="badge">3</span></div>
          </header>
          <section class="cards">
            ${cards.map(([t, v, n, g, vb, c]) => html`<div class="card">
              <div class="top"><span>${t}</span><div class="tile ${c}">${ic(g, vb)}</div></div>
              <div class="value">${v}</div><div class="note">${n}</div>
            </div>`)}
          </section>
          <div class="tabs"><div class="tab on">Ringkasan</div><div class="tab">Perjalanan Terakhir</div><div class="tab">Aktivitas</div><div class="tab">Rekomendasi</div></div>
          <section class="panel first">
            <h2>Navigasi &amp; Rute Perjalanan</h2>
            <div class="pick">
              <div class="select"><span>Jakarta (CGK)</span>${chevron}</div>
              <svg class="arrow" viewBox="0 0 11 5"><path d="M0 1.700h7.500V0L11 2.500 7.500 5V3.300H0z" fill="#888"/></svg>
              <div class="select"><span>Bali - Denpasar (DPS)</span>${chevron}</div>
              <div class="go">Tampilkan Rute</div>
            </div>
            <route-map></route-map>
          </section>
          <section class="panel second"><h2>Pelacakan Lokasi</h2><div class="enable">Aktifkan</div></section>
        </main>
      </div>`;
  }
}
